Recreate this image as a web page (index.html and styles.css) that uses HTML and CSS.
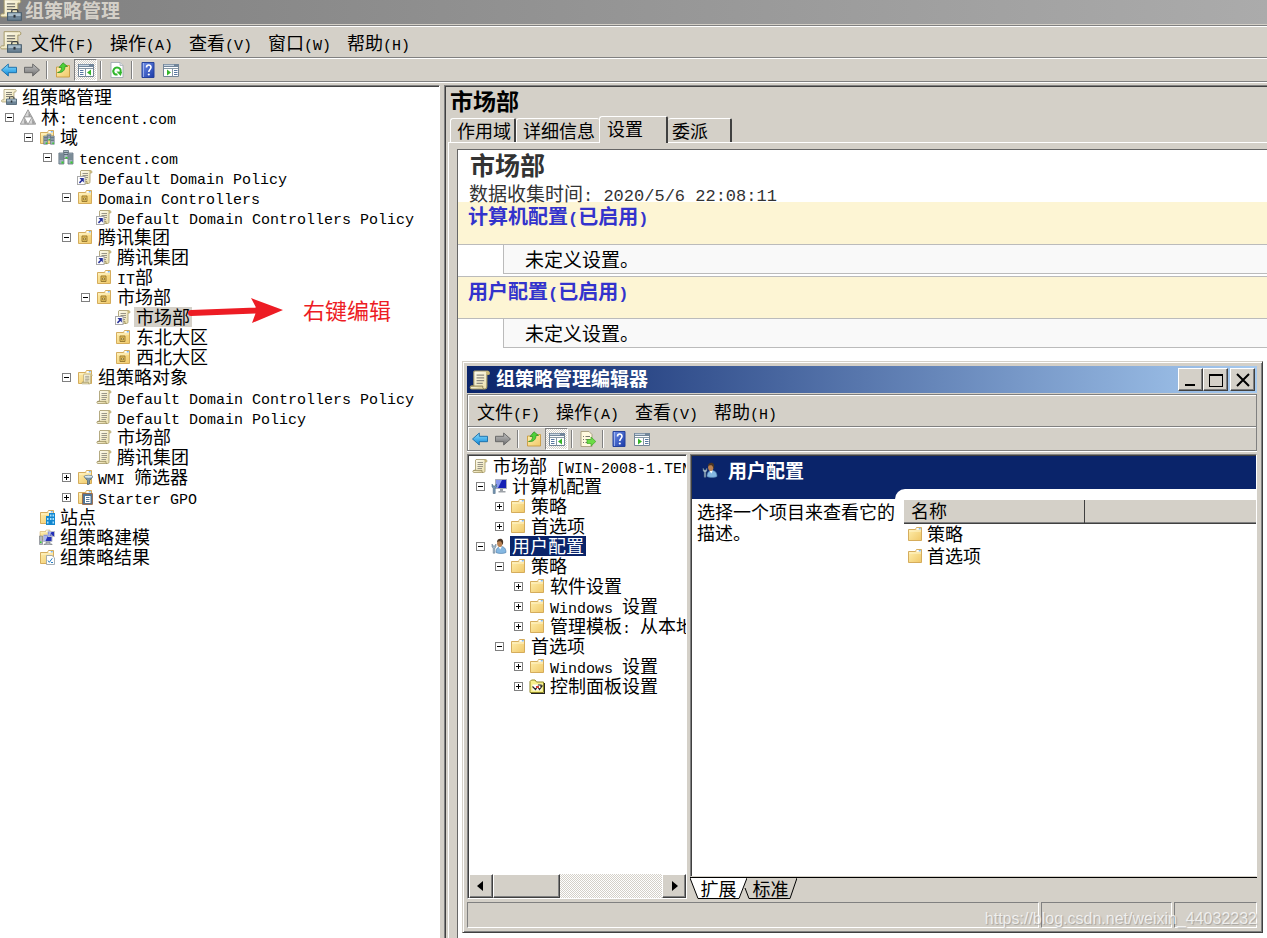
FILE: index.html
```html
<!DOCTYPE html>
<html lang="zh-CN">
<head>
<meta charset="utf-8">
<title>组策略管理</title>
<link rel="stylesheet" href="styles.css">
</head>
<body>
<svg class="defs" aria-hidden="true">
  <defs>
    <linearGradient id="gold" x1="0" y1="0" x2="1" y2="1"><stop offset="0" stop-color="#fff0b0"/><stop offset="1" stop-color="#f0c868"/></linearGradient>
    <linearGradient id="paper" x1="0" y1="0" x2="1" y2="1"><stop offset="0" stop-color="#fffef4"/><stop offset="1" stop-color="#e8dca6"/></linearGradient>
    <linearGradient id="blue" x1="0" y1="0" x2="0" y2="1"><stop offset="0" stop-color="#8fe0ff"/><stop offset="1" stop-color="#0a86d8"/></linearGradient>
    <linearGradient id="grey" x1="0" y1="0" x2="0" y2="1"><stop offset="0" stop-color="#c4c4c4"/><stop offset="1" stop-color="#6f6f6f"/></linearGradient>
    <linearGradient id="help" x1="0" y1="0" x2="1" y2="1"><stop offset="0" stop-color="#6f8fe8"/><stop offset="1" stop-color="#1a3aa8"/></linearGradient>
  </defs>
  <symbol id="scroll" viewBox="0 0 16 16">
    <path d="M4 1.500h9.500a1.500 1.500 0 0 1 1 2.500H13v8.500c0 1.500-.6 2-1.500 2H2c-1.400 0-1.600-2 0-2.200h1.500V2z" fill="url(#paper)" stroke="#a39766" stroke-width=".8"/>
    <path d="M1.500 12.400H10v1.200c0 .6.400 1 1 1" fill="#e2d6a4" stroke="#8d8255" stroke-width=".7"/>
    <path d="M12.800 1.500c-.8.800-.6 2 .2 2.500h1.500c.7-.8.300-2.300-1-2.500z" fill="#c9b878"/>
    <path d="M5.500 4.500h5.500M5.500 6.500h5.500M5.500 8.500h5.500M5.500 10.500h4.500" stroke="#8e8b80" stroke-width=".9"/>
  </symbol>
  <symbol id="link" viewBox="0 0 16 16">
    <use href="#scroll"/>
    <rect x=".5" y="7.500" width="7.500" height="8" fill="#fff" stroke="#a9a9a9"/>
    <path d="M6.800 9v4.600L5.300 12.100 3 14.400 1.900 13.300 4.200 11 2.500 9z" fill="#26309a"/>
  </symbol>
  <symbol id="gpm" viewBox="0 0 16 16">
    <path d="M3 .5h10.500a1.300 1.300 0 0 1 .8 2.500H13v10H1.500C.2 13 0 11 1.500 10.800H3z" fill="url(#paper)" stroke="#a39766" stroke-width=".7"/>
    <path d="M5 3.500h6M5 5.500h6M5 7.500h4" stroke="#77756c" stroke-width=".9"/>
    <path d="M8.500 10V9c0-.9.500-1.300 1-1.300H12c.6 0 1 .4 1 1.300v1" fill="none" stroke="#3c4044"/>
    <path d="M5.500 10h10v5.500h-10z" fill="#6d8496" stroke="#465c6c" stroke-width=".8"/>
    <path d="M6 10.400h9v2H6z" fill="#a9bdca"/><path d="M9.800 11.500h1.500v2H9.800z" fill="#2b3238"/>
  </symbol>
  <symbol id="folder" viewBox="0 0 16 16">
    <path d="M1.500 14.500v-11h7l1-2h5v13z" fill="url(#gold)" stroke="#d0a550" stroke-width=".9"/>
    <path d="M9.500 2h4.500v1.800H9.500z" fill="#fff"/><path d="M11.800 2.300h2v1h-2z" fill="#4c9ae0"/>
    <path d="M2 5h12" stroke="#fff5cc"/>
  </symbol>
  <symbol id="ou" viewBox="0 0 16 16">
    <use href="#folder"/>
    <path d="M5 7h5v5.500H5z" fill="#e5c25c" stroke="#94752c" stroke-width=".9"/><path d="M6.500 9h2v1.800h-2z" fill="#fff2b0" stroke="#6c4f12" stroke-width=".6"/>
  </symbol>
  <symbol id="forest" viewBox="0 0 16 16">
    <path d="M8 .8l4 7.200H4zM4 8l4 7.200H.3zM12 8l3.700 7.200H8z" fill="#d6d6d6" stroke="#8a8a8a" stroke-width=".8"/>
    <path d="M4 8h8l-4 7.200z" fill="#fff" stroke="#999" stroke-width=".7"/>
    <path d="M8.500 2.500L11 7.500H8.500zM4.200 9.500L7 14.700H4.200zM12.200 9.500l2.700 5.200h-2.700z" fill="#9a9a9a"/>
  </symbol>
  <symbol id="server" viewBox="0 0 16 16">
    <path d="M5.500 1.500h5v8h-5z" fill="#aebcc6" stroke="#64737e" stroke-width=".8"/>
    <path d="M.9 4h5v11h-5zM10 4h5v11h-5z" fill="#9fb0bc" stroke="#5f707c" stroke-width=".8"/>
    <path d="M1.500 6H5.500M1.500 8H5.500M1.500 10H5.500M10.500 6h4M10.500 8h4M10.500 10h4M6 3.500h4M6 5.500h4" stroke="#485863" stroke-width=".8"/>
    <path d="M3.500 12.500h2v2h-2zM12.500 12.500h2v2h-2zM7.500 8h2v1.500h-2z" fill="#37d22a"/>
  </symbol>
  <symbol id="domains" viewBox="0 0 16 16"><use href="#folder"/><use href="#server" x="4" y="4" width="12" height="12"/></symbol>
  <symbol id="gpos" viewBox="0 0 16 16"><use href="#folder"/><use href="#scroll" x="4" y="4" width="12" height="12"/></symbol>
  <symbol id="wmi" viewBox="0 0 16 16"><use href="#folder"/>
    <path d="M7 7.500c2-1.600 7-1.600 9 0l-3.500 4.200V15l-2 1v-4.300z" fill="#7893a5" stroke="#476070" stroke-width=".7"/><ellipse cx="11.500" cy="7.600" rx="4" ry="1.200" fill="#d8e8f0"/>
  </symbol>
  <symbol id="starter" viewBox="0 0 16 16"><use href="#folder"/>
    <path d="M5.500 4.500h9.900v10.900H5.500z" fill="#4f7596" stroke="#9a6a48"/><path d="M8 7h5.500v7H8z" fill="#fff"/><path d="M9 8.500h3.500M9 10.500h3.500M9 12.500h3.500" stroke="#56799a"/>
  </symbol>
  <symbol id="sites" viewBox="0 0 16 16"><use href="#folder"/>
    <path d="M10 4h6v12h-6zM7 7h4v9H7z" fill="#1387cf"/><path d="M11 5.500h1.500v2H11zM13.500 5.500H15v2h-1.500zM11 9h1.500v2H11zM13.500 9H15v2h-1.500zM8 9h1.500v2H8zM8 12.500h1.500v2H8zM13.500 12.500H15v2h-1.500z" fill="#a8e2ff"/>
  </symbol>
  <symbol id="model" viewBox="0 0 16 16"><use href="#folder" width="12" height="12"/>
    <path d="M9 2.500h6.500v5H9zM4.500 6h8.500v6.500H4.500z" fill="#2330b8" stroke="#b9bccb"/><path d="M5 6.500h4L6.500 12H5zM9.500 3h3L10.500 7h-1z" fill="#a7b4ef"/>
    <path d="M7 13h4v2h2v1H5v-1h2zM.5 7h3v8.500h-3z" fill="#b4b8bd" stroke="#747980" stroke-width=".6"/><path d="M1 12.500h1.500V14H1z" fill="#2fd12f"/>
  </symbol>
  <symbol id="result" viewBox="0 0 16 16"><use href="#folder"/>
    <path d="M7.500 6.500H13l2.500 2.300v6.700h-8z" fill="#fff" stroke="#8f9aa3" stroke-width=".8"/><path d="M9 11.500l1.300 1.800 3-4M12 13.500h2" fill="none" stroke="#247bc2"/>
  </symbol>
  <symbol id="computer" viewBox="0 0 16 16">
    <path d="M4.500 1.500h11v9h-11z" fill="#1520b4" stroke="#a8adb8"/><path d="M5 2h6L7 10H5z" fill="#8796ee"/>
    <path d="M9 11h3v2h2.500v1.500h-7V13H9z" fill="#9da2a8"/>
    <path d="M1 6v3l1.200 1v5.500h2V10L5.500 9V6L4 8H2.500z" fill="#7597b5" stroke="#3d5b76" stroke-width=".5"/>
  </symbol>
  <symbol id="user" viewBox="0 0 16 16">
    <path d="M5 14.500c0-4 2-6 5-6s5 2 5 6c-2 1.300-8 1.300-10 0z" fill="#85b8e2" stroke="#4b7ba8" stroke-width=".6"/>
    <path d="M7.500 8.500l1.700 3L11 8.500z" fill="#fff"/><ellipse cx="8.800" cy="5.300" rx="2.700" ry="3.600" fill="#b98152"/>
    <path d="M6 4.500C6 1.800 7.500.8 9.300.8c2.600 0 3.500 2.300 2.500 6.200-.8-1.300-.8-3-2.300-3.700C8 3.200 6.800 3.500 6 4.500z" fill="#4a3524"/>
    <path d="M1 6v3l1.200 1v5.200h1.600V10L5 9V6L3.700 8H2.300z" fill="#a5bacb" stroke="#546e84" stroke-width=".5"/>
  </symbol>
  <symbol id="cpanel" viewBox="0 0 16 16">
    <path d="M1 14.500V3.500L2.500 2H6l1.500 2h7v10.500z" fill="#f7f08c" stroke="#8e8727"/><path d="M2 15.500h14M15.500 5v10" stroke="#222"/>
    <path d="M3.500 6.500h9v6h-9z" fill="#fff"/><path d="M3.500 8.500l3 3 2-3 2 3 3-4M9 7h3v3" fill="none" stroke="#222" stroke-width="1.200"/><path d="M7 8h3v2H7z" fill="#d3423a"/>
  </symbol>
  <symbol id="back" viewBox="0 0 16 16"><path d="M.5 8L7.300 2v3.300h8.200v5.400H7.300V14z" fill="url(#blue)" stroke="#176ba6" stroke-width=".9"/></symbol>
  <symbol id="next" viewBox="0 0 16 16"><path d="M15.500 8L8.700 2v3.300H.5v5.400h8.200V14z" fill="url(#grey)" stroke="#626262" stroke-width=".9"/></symbol>
  <symbol id="up" viewBox="0 0 16 16">
    <path d="M1.500 15V5h6l1-1.500h6V15z" fill="url(#gold)" stroke="#c99b40" stroke-width=".9"/>
    <path d="M2.500 10.500c3-.5 4-2.500 4-5H4L8 .8l4.500 3.700H10C10 8.500 7.500 11 2.500 10.500z" fill="#4ed13a" stroke="#268b1c" stroke-width=".7"/>
  </symbol>
  <symbol id="treepane" viewBox="0 0 16 16">
    <path d="M.5 2.500h15v12H.5z" fill="#fff" stroke="#748595"/><path d="M0 2h16v3H0z" fill="#72869a"/><path d="M1 3.300h10" stroke="#dbe7f0"/><path d="M1 6.500h14M7.500 6.500v8" stroke="#8798a6"/>
    <path d="M2 8.500h3.500M2 10.500h3.500M2 12.500h3.500" stroke="#5878a0"/><path d="M13 7.500v6l-4-3z" fill="#36b52a"/>
  </symbol>
  <symbol id="actpane" viewBox="0 0 16 16">
    <path d="M.5 2.500h15v12H.5z" fill="#fff" stroke="#748595"/><path d="M0 2h16v3H0z" fill="#72869a"/><path d="M1 3.300h10" stroke="#dbe7f0"/><path d="M1 6.500h14M9.500 6.500v8" stroke="#8798a6"/>
    <path d="M11 8.500h3.500M11 10.500h3.500M11 12.500h3.500" stroke="#5878a0"/><path d="M4 7.500v6l4-3z" fill="#36b52a"/>
  </symbol>
  <symbol id="refresh" viewBox="0 0 16 16">
    <path d="M2 .5h9l3 3v12H2z" fill="#fff" stroke="#a3abb2" stroke-width=".9"/><path d="M11 .5v3h3" fill="#dde2e6" stroke="#a3abb2" stroke-width=".7"/>
    <path d="M11.500 10.500c1-3-1-5-3.500-5s-4.300 2.500-3.500 4.800c.7 2 2.500 2.500 4 2.200" fill="none" stroke="#31b72c" stroke-width="2"/><path d="M7.500 9.500l5.700.3-1.500 4.200z" fill="#31b72c"/>
  </symbol>
  <symbol id="helpbook" viewBox="0 0 16 16">
    <path d="M2 .5h12v15H2z" fill="url(#help)" stroke="#26429b"/><path d="M3.500 1v14" stroke="#b8c8f5" stroke-width=".7"/>
    <path d="M6.500 5.500C6.500 2.300 11 2.300 11 5.300 11 7.500 8.800 7.500 8.800 10" fill="none" stroke="#fff" stroke-width="1.600"/><circle cx="8.800" cy="12.500" r="1.100" fill="#fff"/>
  </symbol>
  <symbol id="export" viewBox="0 0 16 16">
    <path d="M1 .5h8l3 3v12H1z" fill="#fff9df" stroke="#a79d7e" stroke-width=".9"/><path d="M3 5.500h1M5.500 5.500H10M3 8.500h1M5.500 8.500H10M3 11.500h1M5.500 11.500H9" stroke="#77756c"/>
    <path d="M7 8.500h4V6l4.800 4.500L11 15v-2.500H7z" fill="#6bdc46" stroke="#3fa527" stroke-width=".7"/>
  </symbol>
</svg>

<header class="titlebar inactive">
  <svg class="i22"><use href="#gpm"/></svg>
  <h1>组策略管理</h1>
</header>
<nav class="menubar main-menu">
  <svg class="i22"><use href="#gpm"/></svg>
  <button>文件<span class="en">(F)</span></button>
  <button>操作<span class="en">(A)</span></button>
  <button>查看<span class="en">(V)</span></button>
  <button>窗口<span class="en">(W)</span></button>
  <button>帮助<span class="en">(H)</span></button>
</nav>
<div class="toolbar main-tools">
  <button aria-label="后退"><svg><use href="#back"/></svg></button>
  <button aria-label="前进"><svg><use href="#next"/></svg></button>
  <i class="sep"></i>
  <button aria-label="上一级"><svg><use href="#up"/></svg></button>
  <button class="pressed" aria-label="显示控制台树"><svg><use href="#treepane"/></svg></button>
  <i class="sep"></i>
  <button aria-label="刷新"><svg><use href="#refresh"/></svg></button>
  <i class="sep"></i>
  <button aria-label="帮助"><svg><use href="#helpbook"/></svg></button>
  <button aria-label="显示操作窗格"><svg><use href="#actpane"/></svg></button>
</div>

<main class="workspace">
  <section class="pane tree-pane">
    <div class="row root"><svg><use href="#gpm"/></svg><span>组策略管理</span></div>
    <ul class="tree">
      <li><div class="row"><button class="tg" aria-label="折叠"></button><svg><use href="#forest"/></svg><span>林<span class="en">: tencent.com</span></span></div>
        <ul>
          <li><div class="row"><button class="tg" aria-label="折叠"></button><svg><use href="#domains"/></svg><span>域</span></div>
            <ul>
              <li><div class="row"><button class="tg" aria-label="折叠"></button><svg><use href="#server"/></svg><span><span class="en">tencent.com</span></span></div>
                <ul>
                  <li><div class="row leaf"><svg><use href="#link"/></svg><span><span class="en">Default Domain Policy</span></span></div></li>
                  <li><div class="row"><button class="tg" aria-label="折叠"></button><svg><use href="#ou"/></svg><span><span class="en">Domain Controllers</span></span></div>
                    <ul><li><div class="row leaf"><svg><use href="#link"/></svg><span><span class="en">Default Domain Controllers Policy</span></span></div></li></ul>
                  </li>
                  <li><div class="row"><button class="tg" aria-label="折叠"></button><svg><use href="#ou"/></svg><span>腾讯集团</span></div>
                    <ul>
                      <li><div class="row leaf"><svg><use href="#link"/></svg><span>腾讯集团</span></div></li>
                      <li><div class="row leaf"><svg><use href="#ou"/></svg><span><span class="en">IT</span>部</span></div></li>
                      <li><div class="row"><button class="tg" aria-label="折叠"></button><svg><use href="#ou"/></svg><span>市场部</span></div>
                        <ul>
                          <li><div class="row leaf"><svg><use href="#link"/></svg><span class="dim">市场部</span></div></li>
                          <li><div class="row leaf"><svg><use href="#ou"/></svg><span>东北大区</span></div></li>
                          <li><div class="row leaf"><svg><use href="#ou"/></svg><span>西北大区</span></div></li>
                        </ul>
                      </li>
                    </ul>
                  </li>
                  <li><div class="row"><button class="tg" aria-label="折叠"></button><svg><use href="#gpos"/></svg><span>组策略对象</span></div>
                    <ul>
                      <li><div class="row leaf"><svg><use href="#scroll"/></svg><span><span class="en">Default Domain Controllers Policy</span></span></div></li>
                      <li><div class="row leaf"><svg><use href="#scroll"/></svg><span><span class="en">Default Domain Policy</span></span></div></li>
                      <li><div class="row leaf"><svg><use href="#scroll"/></svg><span>市场部</span></div></li>
                      <li><div class="row leaf"><svg><use href="#scroll"/></svg><span>腾讯集团</span></div></li>
                    </ul>
                  </li>
                  <li><div class="row"><button class="tg plus" aria-label="展开"></button><svg><use href="#wmi"/></svg><span><span class="en">WMI </span>筛选器</span></div></li>
                  <li><div class="row"><button class="tg plus" aria-label="展开"></button><svg><use href="#starter"/></svg><span><span class="en">Starter GPO</span></span></div></li>
                </ul>
              </li>
            </ul>
          </li>
          <li><div class="row leaf"><svg><use href="#sites"/></svg><span>站点</span></div></li>
          <li><div class="row leaf"><svg><use href="#model"/></svg><span>组策略建模</span></div></li>
          <li><div class="row leaf"><svg><use href="#result"/></svg><span>组策略结果</span></div></li>
        </ul>
      </li>
    </ul>
    <svg class="arrow" viewBox="0 0 96 26"><path d="M3 12L68 9.500 63 0l32 12-31 13 3.500-9.500L3 18a3 3 0 0 1 0-6z" fill="#ed1c24"/></svg>
    <span class="note">右键编辑</span>
  </section>

  <section class="detail">
    <h2>市场部</h2>
    <div class="tabs">
      <button class="t-scope">作用域</button>
      <button class="t-info">详细信息</button>
      <button class="t-set active">设置</button>
      <button class="t-del">委派</button>
    </div>
    <div class="panel">
      <article class="report">
        <h3>市场部</h3>
        <p class="stamp">数据收集时间<span class="en">: 2020/5/6 22:08:11</span></p>
        <h4>计算机配置<span class="en">(</span>已启用<span class="en">)</span></h4>
        <p class="item">未定义设置。</p>
        <h4 class="second">用户配置<span class="en">(</span>已启用<span class="en">)</span></h4>
        <p class="item">未定义设置。</p>
      </article>
    </div>
  </section>
</main>

<section class="editor">
  <div class="titlebar">
    <svg class="i22"><use href="#scroll"/></svg>
    <h2>组策略管理编辑器</h2>
    <div class="caption">
      <button aria-label="最小化"><svg viewBox="0 0 16 16"><path d="M2 12h10v2H2z"/></svg></button>
      <button aria-label="最大化"><svg viewBox="0 0 16 16"><path d="M1 2h14v13H1zM2 4v10h12V4z" fill-rule="evenodd"/></svg></button>
      <button class="close" aria-label="关闭"><svg viewBox="0 0 16 16"><path d="M2 2l12 12M14 2L2 14" stroke="#000" stroke-width="2"/></svg></button>
    </div>
  </div>
  <div class="bars">
    <nav class="menubar">
      <button>文件<span class="en">(F)</span></button>
      <button>操作<span class="en">(A)</span></button>
      <button>查看<span class="en">(V)</span></button>
      <button>帮助<span class="en">(H)</span></button>
    </nav>
    <div class="toolbar">
      <button aria-label="后退"><svg><use href="#back"/></svg></button>
      <button aria-label="前进"><svg><use href="#next"/></svg></button>
      <i class="sep"></i>
      <button aria-label="上一级"><svg><use href="#up"/></svg></button>
      <button class="pressed" aria-label="显示控制台树"><svg><use href="#treepane"/></svg></button>
      <i class="sep"></i>
      <button aria-label="导出列表"><svg><use href="#export"/></svg></button>
      <i class="sep"></i>
      <button aria-label="帮助"><svg><use href="#helpbook"/></svg></button>
      <button aria-label="显示操作窗格"><svg><use href="#actpane"/></svg></button>
    </div>
  </div>
  <div class="split">
    <div class="pane side">
      <div class="side-tree">
        <div class="row root"><svg><use href="#scroll"/></svg><span>市场部<span class="en"> [WIN-2008-1.TEN</span></span></div>
        <ul class="tree">
          <li><div class="row"><button class="tg" aria-label="折叠"></button><svg><use href="#computer"/></svg><span>计算机配置</span></div>
            <ul>
              <li><div class="row"><button class="tg plus" aria-label="展开"></button><svg><use href="#folder"/></svg><span>策略</span></div></li>
              <li><div class="row"><button class="tg plus" aria-label="展开"></button><svg><use href="#folder"/></svg><span>首选项</span></div></li>
            </ul>
          </li>
          <li><div class="row"><button class="tg" aria-label="折叠"></button><svg><use href="#user"/></svg><span class="sel">用户配置</span></div>
            <ul>
              <li><div class="row"><button class="tg" aria-label="折叠"></button><svg><use href="#folder"/></svg><span>策略</span></div>
                <ul>
                  <li><div class="row"><button class="tg plus" aria-label="展开"></button><svg><use href="#folder"/></svg><span>软件设置</span></div></li>
                  <li><div class="row"><button class="tg plus" aria-label="展开"></button><svg><use href="#folder"/></svg><span><span class="en">Windows </span>设置</span></div></li>
                  <li><div class="row"><button class="tg plus" aria-label="展开"></button><svg><use href="#folder"/></svg><span>管理模板<span class="en">: </span>从本地</span></div></li>
                </ul>
              </li>
              <li><div class="row"><button class="tg" aria-label="折叠"></button><svg><use href="#folder"/></svg><span>首选项</span></div>
                <ul>
                  <li><div class="row"><button class="tg plus" aria-label="展开"></button><svg><use href="#folder"/></svg><span><span class="en">Windows </span>设置</span></div></li>
                  <li><div class="row"><button class="tg plus" aria-label="展开"></button><svg><use href="#cpanel"/></svg><span>控制面板设置</span></div></li>
                </ul>
              </li>
            </ul>
          </li>
        </ul>
      </div>
      <div class="scrollbar">
        <button aria-label="向左滚动"><svg viewBox="0 0 16 16"><path d="M10 3v10L4 8z"/></svg></button>
        <div class="thumb"></div>
        <div class="track"></div>
        <button aria-label="向右滚动"><svg viewBox="0 0 16 16"><path d="M6 3v10l6-5z"/></svg></button>
      </div>
    </div>
    <div class="view">
      <div class="view-box">
        <div class="view-head"><svg><use href="#user"/></svg><h3>用户配置</h3></div>
        <div class="view-body">
          <p class="hint">选择一个项目来查看它的描述。</p>
          <div class="list">
            <table>
              <thead><tr><th class="name">名称</th><th></th></tr></thead>
              <tbody>
                <tr><td colspan="2"><div class="cell"><svg><use href="#folder"/></svg><span>策略</span></div></td></tr>
                <tr><td colspan="2"><div class="cell"><svg><use href="#folder"/></svg><span>首选项</span></div></td></tr>
              </tbody>
            </table>
          </div>
        </div>
      </div>
      <div class="sheet-tabs">
        <button class="first"><svg viewBox="0 0 57 21" preserveAspectRatio="none"><path d="M0 0L8 20.500H49L57 0" fill="#fff" stroke="#000"/></svg><span>扩展</span></button>
        <button class="second"><svg viewBox="0 0 53 21" preserveAspectRatio="none"><path d="M1 10L5 20.500H46L53 0" fill="none" stroke="#000"/></svg><span>标准</span></button>
      </div>
    </div>
  </div>
  <footer class="status"><span></span><span></span><span></span></footer>
</section>
<div class="watermark">https://blog.csdn.net/weixin_44032232</div>
</body>
</html>
```
FILE: styles.css
```css
* { box-sizing: border-box; }

body {
  position: relative;
  display: flex;
  flex-direction: column;
  min-height: 100vh;
  margin: 0;
  overflow: hidden;
  background: #d4d0c8;
  color: #000;
  font: 18px/20px "Noto Sans CJK SC", sans-serif;
}

h1, h2, h3, h4, p, ul { margin: 0; padding: 0; }
ul { list-style: none; }
svg { flex: none; width: 16px; height: 16px; display: block; }
button { margin: 0; padding: 0; border: 0; background: none; color: inherit; font: inherit; white-space: nowrap; }
.defs { position: absolute; width: 0; height: 0; }
.en { font-family: "Liberation Mono", monospace; font-size: 15px; line-height: 0; white-space: pre; }
.i22 { width: 22px; height: 22px; }

/* title bars */
.titlebar { display: flex; align-items: center; height: 27px; gap: 5px; padding-left: 2px; background: linear-gradient(90deg, #0a246a, #a6caf0); color: #fff; }
.titlebar h1, .titlebar h2 { font-size: 19px; font-weight: 700; line-height: 20px; }
.titlebar h2 { padding-bottom: 3px; }
.titlebar.inactive { height: 24px; gap: 3px; padding: 0 0 4px; background: linear-gradient(90deg, #808080, #ababab); color: #d4d0c8; }
.caption { display: flex; margin-left: auto; padding-right: 2px; }
.caption button, .scrollbar button, .thumb { border: 1px solid; border-color: #fff #404040 #404040 #fff; background: #d4d0c8; box-shadow: inset -1px -1px #808080; }
.caption button { display: grid; place-items: center; width: 25px; height: 23px; }
.caption .close { margin-left: 2px; }

/* menus and toolbars */
.menubar { display: flex; align-items: center; gap: 16px; height: 32px; padding-left: 9px; border-top: 1px solid #fff; border-bottom: 1px solid #808080; }
.main-menu { height: 32px; margin-top: 2px; padding-left: 0; box-shadow: 0 -1px #808080; }
.main-menu .i22 { margin-right: -7px; }
.toolbar { display: flex; align-items: center; height: 24px; border-top: 1px solid #fff; border-bottom: 1px solid #808080; }
.toolbar button { display: grid; place-items: center; width: 23px; height: 22px; }
.toolbar .pressed { border: 1px solid; border-color: #808080 #fff #fff #808080; background: repeating-conic-gradient(#fff 0 25%, #d4d0c8 0 50%) 0 0 / 2px 2px; }
.toolbar .sep { width: 2px; height: 18px; margin: 0 3px; border-left: 1px solid #808080; border-right: 1px solid #fff; }
.main-tools { margin-left: -3px; }

/* console body */
.workspace { display: grid; grid-template-columns: 440px 1fr; gap: 4px; flex: 1; padding-top: 2px; border-top: 1px solid #fff; }
.pane { border: 1px solid; border-color: #808080 #fff #fff #808080; background: #fff; box-shadow: inset 0 1px #404040; padding-top: 1px; }
.tree-pane { position: relative; border-left: 0; }

.row { display: flex; align-items: center; gap: 5px; height: 20px; padding-left: 5px; white-space: nowrap; }
.row.root { padding-left: 1px; }
.row.leaf { padding-left: 20px; }
.row > span, .cell > span { padding-bottom: 2px; line-height: 18px; }
.tree ul { padding-left: 19px; }
.tg { width: 9px; height: 9px; margin-right: 1px; border: 1px solid #808080; background: linear-gradient(#000, #000) center / 5px 1px no-repeat #fff; flex: none; }
.tg.plus { background: linear-gradient(#000, #000) center / 5px 1px no-repeat, linear-gradient(#000, #000) center / 1px 5px no-repeat #fff; }
.row > .dim { margin-left: -2px; padding: 0 2px 2px; background: #d4d0c8; }
.row > .sel { margin-left: -2px; padding: 0 2px 2px; background: #0a246a; color: #fff; }
.arrow { position: absolute; left: 188px; top: 212px; width: 96px; height: 26px; }
.note { position: absolute; left: 303px; top: 209px; color: #ed1c24; font-size: 22px; line-height: 28px; }

/* detail side */
.detail { display: flex; flex-direction: column; min-width: 0; border-top: 1px solid #808080; border-left: 1px solid #808080; box-shadow: inset 1px 1px #404040; padding: 2px 0 0 3px; }
.detail h2 { padding: 0 0 4px 2px; font-size: 23px; line-height: 24px; font-weight: 700; }
.tabs { display: flex; align-items: flex-end; height: 26px; padding-left: 2px; }
.tabs button { height: 24px; padding: 0 0 2px 6px; border: 1px solid #fff; border-bottom: 0; border-right: 2px solid #404040; border-radius: 3px 2px 0 0; text-align: left; }
.tabs .t-scope { width: 66px; }
.tabs .t-info { width: 83px; border-right: 0; }
.tabs .active { width: 69px; height: 27px; padding: 0 0 5px 7px; margin-bottom: -1px; background: #d4d0c8; z-index: 1; }
.tabs .t-del { width: 64px; padding-left: 4px; border-left: 0; }
.panel { display: flex; flex: 1; padding: 6px 0 0 8px; border-top: 1px solid #fff; border-left: 1px solid #fff; }
.report { flex: 1; padding-top: 1px; border-top: 1px solid #666; border-left: 1px solid #666; background: #fff; color: #333; }
.report h3 { padding: 0 0 6px 12px; font-size: 25px; line-height: 26px; font-weight: 700; }
.report .stamp { padding-left: 11px; font-size: 19px; line-height: 19px; white-space: nowrap; }
.report .stamp .en { font-size: 17px; }
.report h4 { height: 43px; padding-left: 10px; border-bottom: 1px solid #bbb; background: #fdf5d4; color: #33c; font-size: 20px; line-height: 27px; }
.report h4 .en { font-size: 17px; }
.report .second { margin-top: 2px; border-top: 1px solid #bbb; }
.item { height: 29px; margin-left: 45px; padding-left: 21px; border-left: 1px solid #bbb; border-bottom: 1px solid #bbb; background: #f9f9f9; color: #000; font-size: 19px; line-height: 27px; }

/* editor window floats over the console */
.editor { position: absolute; top: 361px; right: 4px; bottom: 5px; left: 462px; display: flex; flex-direction: column; padding: 3px 5px 4px 3px; border: 1px solid; border-color: #d4d0c8 #404040 #404040 #d4d0c8; background: #d4d0c8; box-shadow: inset 1px 1px #fff, inset -1px -1px #808080; }
.editor > .titlebar { margin: 1px 0 0 1px; flex: none; }
.bars { margin: 1px 0 0 1px; border: 1px solid #808080; border-bottom: 0; box-shadow: inset 1px 0 #fff, 0 1px #fff; flex: none; }
.split { display: grid; grid-template-columns: 220px 1fr; gap: 3px; flex: 1; min-height: 0; margin: 3px 0 3px 1px; }
.side { display: flex; flex-direction: column; overflow: hidden; box-shadow: inset 1px 1px #404040; padding-left: 1px; min-width: 0; }
.side-tree { flex: 1; overflow: hidden; padding-left: 2px; }
.scrollbar { display: flex; height: 24px; }
.scrollbar button { display: grid; place-items: center; width: 24px; }
.thumb { width: 67px; }
.track { flex: 1; background: repeating-conic-gradient(#fff 0 25%, #d4d0c8 0 50%) 0 0 / 2px 2px; }
.view { display: flex; flex-direction: column; min-width: 0; }
.view-box { display: flex; flex-direction: column; flex: 1; border: 1px solid; border-color: #808080 #fff #d4d0c8 #808080; box-shadow: inset 1px 1px #404040; padding: 1px 0 0 1px; background: #fff; }
.view-head { display: flex; align-items: center; gap: 10px; height: 33px; padding: 0 0 6px 10px; background: #0a246a; color: #fff; }
.view-head h3 { font-size: 19px; line-height: 24px; font-weight: 700; }
.view-body { display: flex; flex: 1; background: linear-gradient(#0a246a, #0a246a) 0 0 / 100% 10px no-repeat #fff; }
.hint { width: 203px; padding: 12px 0 0 5px; line-height: 21px; flex: none; }
.list { flex: 1; padding: 11px 0 0 9px; border-radius: 10px 0 0 0; background: #fff; }
table { width: 100%; border-collapse: collapse; table-layout: fixed; }
th { height: 23px; padding: 0 7px 2px; border-bottom: 1px solid #404040; background: #d4d0c8; box-shadow: inset 0 -1px #808080; font-weight: 400; text-align: left; line-height: 20px; }
.name { width: 180px; border-right: 1px solid #404040; }
td { height: 22px; padding: 0; }
.cell { display: flex; align-items: center; gap: 4px; padding-left: 3px; }
.sheet-tabs { display: flex; height: 22px; border-top: 1px solid #000; }
.sheet-tabs button { position: relative; height: 21px; padding-bottom: 2px; }
.sheet-tabs svg { position: absolute; inset: 0; width: 100%; height: 100%; }
.sheet-tabs span { position: relative; }
.sheet-tabs .first { width: 57px; }
.sheet-tabs .second { width: 53px; margin-left: -3px; }
.status { display: grid; grid-template-columns: 1fr 131px 83px; gap: 2px; height: 26px; margin-left: 1px; flex: none; }
.status span { border: 1px solid; border-color: #808080 #fff #fff #808080; }

.watermark { position: absolute; right: 10px; bottom: 8px; color: rgba(255, 255, 255, .75); font: 16px/22px "Liberation Sans", sans-serif; text-shadow: 1px 1px 1px rgba(120, 120, 120, .5); }
```
